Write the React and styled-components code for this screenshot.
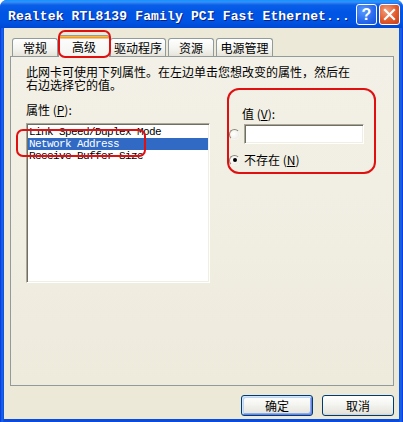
import React from "react";
import styled, { createGlobalStyle } from "styled-components";

const GlobalStyle = createGlobalStyle`
  html, body {
    margin: 0;
    padding: 0;
    background: #ffffff;
  }
  body {
    font-family: "Noto Sans CJK SC", "Liberation Sans", sans-serif;
  }
`;

const tabs = [
  { id: "general", label: "常规", width: 46, offset: 2 },
  { id: "advanced", label: "高级", width: 52, offset: 0, active: true },
  { id: "driver", label: "驱动程序", width: 56, offset: 0 },
  { id: "resources", label: "资源", width: 46, offset: 2 },
  { id: "power", label: "电源管理", width: 57, offset: 2 },
];

const properties = [
  { id: "speed", name: "Link Speed/Duplex Mode" },
  { id: "address", name: "Network Address", selected: true },
  { id: "buffer", name: "Receive Buffer Size" },
];

const App = () => {
  return (
    <>
      <GlobalStyle />
      <Window>
        <TitleBar>
          <Title>Realtek RTL8139 Family PCI Fast Ethernet...</Title>
          <CaptionButtons>
            <HelpButton>?</HelpButton>
            <CloseButton>
              <svg width="13" height="13" viewBox="0 0 13 13">
                <path
                  d="M2 2 L11 11 M11 2 L2 11"
                  stroke="#ffffff"
                  strokeWidth="2.2"
                  strokeLinecap="square"
                />
              </svg>
            </CloseButton>
          </CaptionButtons>
        </TitleBar>

        <Body>
          <TabRow>
            {tabs.map((tab) => (
              <Tab
                key={tab.id}
                $active={tab.active}
                $width={tab.width}
                $offset={tab.offset}
              >
                {tab.label}
              </Tab>
            ))}
          </TabRow>

          <Panel>
            <Description>
              <DescLine>此网卡可使用下列属性。在左边单击您想改变的属性，然后在</DescLine>
              <DescLine>右边选择它的值。</DescLine>
            </Description>

            <Columns>
              <LeftColumn>
                <FieldLabel>
                  属性 (<u>P</u>):
                </FieldLabel>
                <ListBox>
                  {properties.map((item) => (
                    <ListItem key={item.id} $selected={item.selected}>
                      {item.name}
                    </ListItem>
                  ))}
                </ListBox>
              </LeftColumn>

              <RightColumn>
                <ValueLabel>
                  值 (<u>V</u>):
                </ValueLabel>
                <OptionRow>
                  <Radio />
                  <TextInput />
                </OptionRow>
                <OptionRow $gap={9}>
                  <Radio $checked />
                  <OptionText>
                    不存在 (<u>N</u>)
                  </OptionText>
                </OptionRow>
              </RightColumn>
            </Columns>
          </Panel>

          <ButtonRow>
            <PushButton $default>确定</PushButton>
            <PushButton>取消</PushButton>
          </ButtonRow>
        </Body>

        {/* red hand-drawn markers laid over the dialog */}
        <Marker $x={58} $y={30} $w={53} $h={28} />
        <Marker $x={16} $y={129} $w={130} $h={28} />
        <Marker $x={227} $y={88} $w={149} $h={86} $radius={12} />
      </Window>
    </>
  );
};

export default App;

const Window = styled.div`
  position: relative;
  width: 403px;
  height: 422px;
  box-sizing: border-box;
  display: flex;
  flex-direction: column;
  background: linear-gradient(90deg, #0831d9 0px, #166aee 2px, #0a4bdc 4px, #0a4bdc 399px, #166aee 401px, #0831d9 403px);
  border-radius: 7px 7px 0 0;
  overflow: hidden;
`;

const TitleBar = styled.div`
  height: 28px;
  flex-shrink: 0;
  display: flex;
  align-items: center;
  justify-content: space-between;
  padding: 0 3px 0 8px;
  box-sizing: border-box;
  background: linear-gradient(
    180deg,
    #0997ff 0px,
    #3a8ff8 2px,
    #0a5fe8 5px,
    #0055e5 12px,
    #0054e3 22px,
    #0048d4 28px
  );
`;

const Title = styled.div`
  padding-top: 4px;
  color: #ffffff;
  font-family: "Liberation Mono", "DejaVu Sans Mono", monospace;
  font-weight: bold;
  font-size: 13px;
  letter-spacing: 0.15px;
  white-space: nowrap;
  text-shadow: 1px 1px 0 #0a1f80;
`;

const CaptionButtons = styled.div`
  display: flex;
  gap: 2px;
  padding-top: 1px;
`;

const CaptionButton = styled.div`
  width: 21px;
  height: 21px;
  box-sizing: border-box;
  border: 1px solid #ffffff;
  border-radius: 3px;
  display: flex;
  align-items: center;
  justify-content: center;
  color: #ffffff;
`;

const HelpButton = styled(CaptionButton)`
  background: radial-gradient(circle at 35% 30%, #5b9cff 0%, #2a6cf0 55%, #1a4fd0 100%);
  font-family: "Liberation Sans", sans-serif;
  font-weight: bold;
  font-size: 16px;
  line-height: 1;
`;

const CloseButton = styled(CaptionButton)`
  background: radial-gradient(circle at 35% 30%, #f0a080 0%, #e25a2c 55%, #c2401a 100%);
`;

const Body = styled.div`
  flex: 1;
  margin: 0 4px 3px;
  background: #ece9d8;
  display: flex;
  flex-direction: column;
  padding: 6px 5px 0 6px;
`;

const TabRow = styled.div`
  display: flex;
  align-items: flex-end;
  height: 22px;
  position: relative;
  z-index: 1;
`;

const Tab = styled.div`
  width: ${(p) => p.$width}px;
  margin-left: ${(p) => p.$offset}px;
  height: ${(p) => (p.$active ? 22 : 18)}px;
  margin-bottom: ${(p) => (p.$active ? -1 : 0)}px;
  box-sizing: border-box;
  border: 1px solid #919b9c;
  border-bottom: none;
  border-radius: 3px 3px 0 0;
  background: ${(p) =>
    p.$active
      ? "linear-gradient(180deg, #ffc83c 0px, #e68b2c 2px, #fcfcfe 3px, #f4f3ee 100%)"
      : "linear-gradient(180deg, #ffffff 0%, #f3f3ef 60%, #e6e4da 100%)"};
  font-size: 12px;
  line-height: 16px;
  color: #000000;
  text-align: center;
  padding-top: ${(p) => (p.$active ? 3 : 1)}px;
`;

const Panel = styled.div`
  height: 330px;
  box-sizing: border-box;
  border: 1px solid #919b9c;
  background: linear-gradient(180deg, #f3f1e7 0%, #eeebdd 100%);
  padding: 9px 0 0 15px;
`;

const Description = styled.div`
  display: flex;
  flex-direction: column;
  gap: 1px;
`;

const DescLine = styled.div`
  font-size: 12px;
  line-height: 12px;
  height: 12px;
  color: #000000;
  white-space: nowrap;
`;

const Columns = styled.div`
  display: flex;
  gap: 19px;
  margin-top: 12px;
`;

const LeftColumn = styled.div`
  width: 184px;
  display: flex;
  flex-direction: column;
`;

const FieldLabel = styled.div`
  font-size: 12px;
  line-height: 14px;
  height: 14px;
  margin-bottom: 6px;

  u {
    text-underline-offset: 1px;
  }
`;

const Sunken = styled.div`
  box-sizing: border-box;
  background: #ffffff;
  border: 1px solid;
  border-color: #aca899 #ffffff #ffffff #aca899;
  box-shadow: inset 1px 1px 0 #716f64, inset -1px -1px 0 #f1efe2;
`;

const ListBox = styled(Sunken)`
  height: 160px;
  padding: 2px 1px;
  display: flex;
  flex-direction: column;
`;

const ListItem = styled.div`
  height: 12px;
  line-height: 12px;
  padding-left: 1px;
  font-family: "Liberation Mono", "DejaVu Sans Mono", monospace;
  font-size: 11px;
  letter-spacing: -0.6px;
  white-space: nowrap;
  color: ${(p) => (p.$selected ? "#ffffff" : "#000000")};
  background: ${(p) => (p.$selected ? "#316ac5" : "transparent")};
`;

const RightColumn = styled.div`
  display: flex;
  flex-direction: column;
  padding-top: 4px;
`;

const ValueLabel = styled(FieldLabel)`
  padding-left: 13px;
  margin-bottom: 3px;
`;

const OptionRow = styled.div`
  display: flex;
  align-items: center;
  gap: 4px;
  margin-top: ${(p) => p.$gap || 0}px;
`;

const Radio = styled.div`
  width: 11px;
  height: 11px;
  box-sizing: border-box;
  border-radius: 50%;
  border: 1px solid;
  border-color: #8a8778 #f5f4ee #f5f4ee #8a8778;
  background: radial-gradient(circle at 40% 40%, #ffffff 0%, #f3f2ec 60%, #dcd9cc 100%);
  display: flex;
  align-items: center;
  justify-content: center;

  &::after {
    content: "";
    display: ${(p) => (p.$checked ? "block" : "none")};
    width: 4px;
    height: 4px;
    border-radius: 50%;
    background: #000000;
  }
`;

const TextInput = styled(Sunken)`
  width: 120px;
  height: 20px;
`;

const OptionText = styled.div`
  font-size: 12px;
  line-height: 14px;
`;

const ButtonRow = styled.div`
  display: flex;
  justify-content: flex-end;
  gap: 9px;
  margin-top: 9px;
`;

const PushButton = styled.div`
  width: 72px;
  height: 21px;
  box-sizing: border-box;
  border: 1px solid #003c74;
  border-radius: 3px;
  background: linear-gradient(180deg, #ffffff 0%, #f4f4f0 45%, #e6e4dc 90%, #d6d0c5 100%);
  box-shadow: ${(p) =>
    p.$default
      ? "inset 1px 1px 0 #cee7ff, inset -1px -1px 0 #6982ee, inset 2px 2px 0 #bcd4f6, inset -2px -2px 0 #89ade4"
      : "none"};
  font-size: 12px;
  line-height: 19px;
  text-align: center;
  color: #000000;
`;

const Marker = styled.div`
  position: absolute;
  left: ${(p) => p.$x}px;
  top: ${(p) => p.$y}px;
  width: ${(p) => p.$w}px;
  height: ${(p) => p.$h}px;
  box-sizing: border-box;
  border: 2px solid #e01010;
  border-radius: ${(p) => p.$radius || 7}px;
  pointer-events: none;
  z-index: 2;
`;
